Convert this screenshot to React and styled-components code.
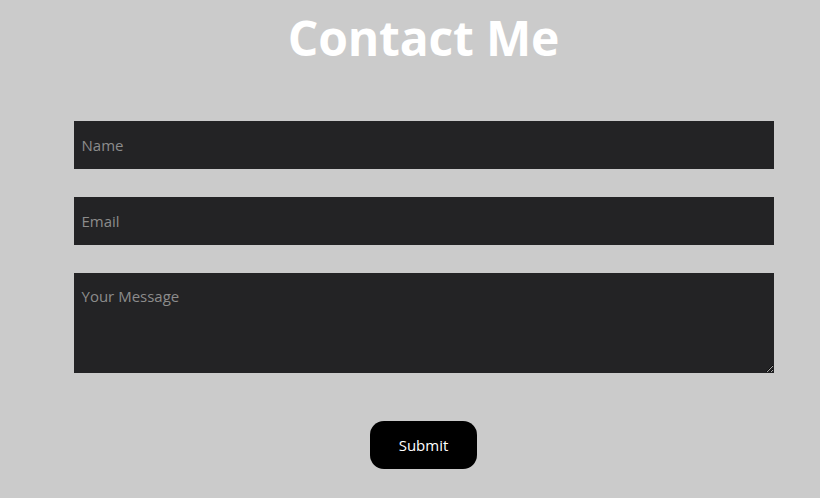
import React from 'react';
import styled, { createGlobalStyle } from 'styled-components';

const GlobalStyle = createGlobalStyle`
  html, body {
    margin: 0;
    padding: 0;
    background-color: #cbcbcb;
    font-family: 'Open Sans', 'Noto Sans', sans-serif;
  }
`;

const Page = styled.div`
  min-height: 498px;
  padding-left: 27px;
  box-sizing: border-box;
  display: flex;
  flex-direction: column;
  align-items: center;
`;

const Title = styled.h1`
  margin: 2px 0 0;
  font-size: 48px;
  line-height: 72px;
  font-weight: 700;
  color: #fff;
  letter-spacing: -0.2px;
`;

const Form = styled.form`
  width: 700px;
  margin-top: 47px;
  display: flex;
  flex-direction: column;
  align-items: center;
  gap: 28px;
`;

const Field = styled.input`
  width: 100%;
  height: 48px;
  box-sizing: border-box;
  padding: 0 8px;
  border: none;
  outline: none;
  background-color: #232325;
  color: #fff;
  font-family: inherit;
  font-size: 15px;

  &::placeholder {
    color: #8c8c8c;
  }
`;

const Message = styled.textarea`
  width: 100%;
  height: 100px;
  box-sizing: border-box;
  padding: 14px 8px;
  border: none;
  outline: none;
  background-color: #232325;
  color: #fff;
  font-family: inherit;
  font-size: 15px;
  line-height: 1.2;
  resize: vertical;
  display: block;

  &::placeholder {
    color: #8c8c8c;
  }
`;

const SubmitButton = styled.button`
  margin-top: 20px;
  width: 107px;
  height: 48px;
  border: none;
  border-radius: 14px;
  background-color: #000;
  color: #fff;
  font-family: inherit;
  font-size: 15px;
  cursor: pointer;
`;

const App = () => (
  <>
    <GlobalStyle />
    <Page>
      <Title>Contact Me</Title>
      <Form onSubmit={(e) => e.preventDefault()}>
        <Field type="text" placeholder="Name" />
        <Field type="email" placeholder="Email" />
        <Message placeholder="Your Message" />
        <SubmitButton type="submit">Submit</SubmitButton>
      </Form>
    </Page>
  </>
);

export default App;
